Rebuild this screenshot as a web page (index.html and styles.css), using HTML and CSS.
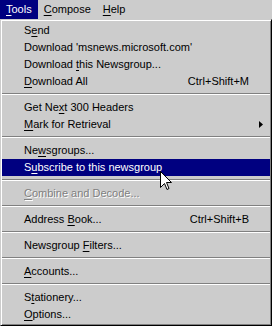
FILE: index.html
```html
<!DOCTYPE html>
<html>
<head>
<meta charset="utf-8">
<link rel="stylesheet" href="styles.css">
</head>
<body>
<div class="screen">
  <div class="menubar">
    <span class="mb-item active"><u>T</u>ools</span>
    <span class="mb-item"><u>C</u>ompose</span>
    <span class="mb-item"><u>H</u>elp</span>
  </div>
  <div class="menu">
    <div class="item"><span>S<u>e</u>nd</span></div>
    <div class="item"><span>Download 'msnews.microsoft.com'</span></div>
    <div class="item"><span>Download <u>t</u>his Newsgroup...</span></div>
    <div class="item"><span><u>D</u>ownload All</span><span class="key">Ctrl+Shift+M</span></div>
    <div class="sep"></div>
    <div class="item"><span>Get Ne<u>x</u>t 300 Headers</span></div>
    <div class="item"><span><u>M</u>ark for Retrieval</span><svg class="arrow" width="4" height="7" viewBox="0 0 4 7"><polygon points="0,0 4,3.5 0,7" fill="#000"/></svg></div>
    <div class="sep"></div>
    <div class="item"><span>Ne<u>w</u>sgroups...</span></div>
    <div class="item selected"><span>S<u>u</u>bscribe to this newsgroup</span></div>
    <div class="sep"></div>
    <div class="item disabled"><span><u>C</u>ombine and Decode...</span></div>
    <div class="sep"></div>
    <div class="item"><span>Address <u>B</u>ook...</span><span class="key">Ctrl+Shift+B</span></div>
    <div class="sep"></div>
    <div class="item"><span>Newsgroup <u>F</u>ilters...</span></div>
    <div class="sep"></div>
    <div class="item"><span><u>A</u>ccounts...</span></div>
    <div class="sep"></div>
    <div class="item"><span>S<u>t</u>ationery...</span></div>
    <div class="item"><span><u>O</u>ptions...</span></div>
  </div>
  <svg class="cursor" width="12" height="19" viewBox="0 0 12 19">
    <polygon points="0.5,0.5 0.5,16.5 4.5,12.5 7,18.5 9,17.5 6.5,11.5 11.5,11.5" fill="#fff" stroke="#000" stroke-width="1"/>
  </svg>
</div>
</body>
</html>
```

FILE: styles.css
```css
html, body {
  margin: 0;
  padding: 0;
}
body {
  background: #cccccc;
  font-family: "Liberation Sans", Arial, sans-serif;
  font-size: 11px;
  color: #000;
}
.screen {
  position: relative;
  width: 272px;
  height: 326px;
  overflow: hidden;
  background: #cccccc;
}
.menubar {
  display: flex;
  height: 19px;
  line-height: 19px;
}
.mb-item {
  padding: 0 6px;
}
.mb-item.active {
  background: #000080;
  color: #fff;
}
u {
  text-decoration: underline;
  text-underline-offset: 2px;
}
.menu {
  box-sizing: border-box;
  width: 272px;
  height: 307px;
  padding: 2px 1px;
  border-top: 1px solid #cccccc;
  border-left: 1px solid #cccccc;
  border-right: 1px solid #000;
  border-bottom: 1px solid #000;
  box-shadow: inset 1px 1px 0 #fff, inset -1px -1px 0 #808080;
}
.item {
  display: flex;
  align-items: center;
  justify-content: space-between;
  height: 17px;
  line-height: 17px;
  padding: 0 21px 0 22px;
  white-space: nowrap;
}
.item.selected {
  background: #000080;
  color: #fff;
}
.item.disabled {
  color: #808080;
  text-shadow: 1px 1px 0 #fff;
}
.arrow {
  margin-right: -14px;
}
.sep {
  margin: 3px 0 4px;
  border-top: 1px solid #808080;
  border-bottom: 1px solid #fff;
  height: 0;
}
.cursor {
  position: absolute;
  left: 160px;
  top: 171px;
}
```
